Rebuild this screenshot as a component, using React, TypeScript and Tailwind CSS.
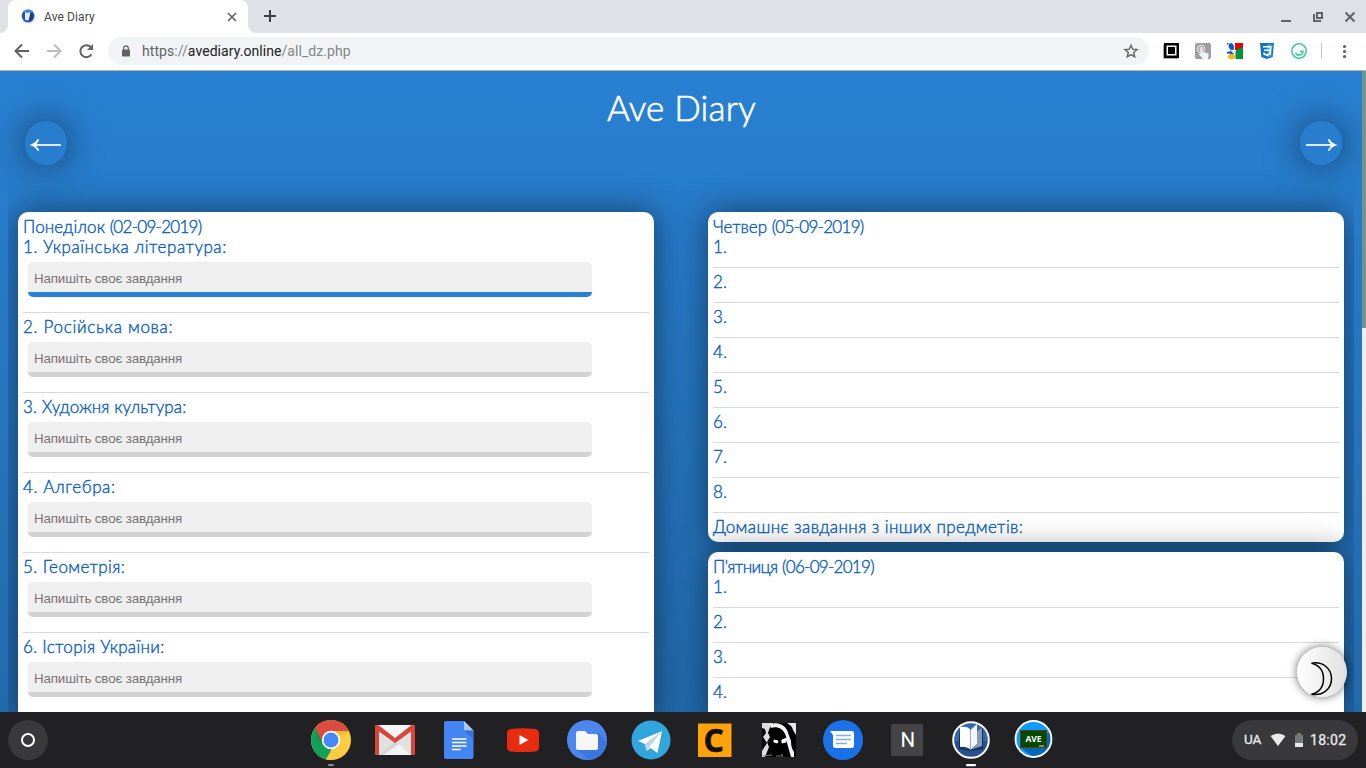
import React from "react";

const PLACEHOLDER = "Напишіть своє завдання";

const MONDAY = [
  { name: "1. Українська література:", track: "tracking-[0.55px]", active: true },
  { name: "2. Російська мова:", track: "tracking-[0.7px]" },
  { name: "3. Художня культура:", track: "tracking-[0.1px]" },
  { name: "4. Алгебра:", track: "tracking-[0.6px]" },
  { name: "5. Геометрія:", track: "tracking-[0.4px]" },
  { name: "6. Історія України:", track: "tracking-[0.3px]" },
];

function TabStrip() {
  return (
    <div className="flex h-[33px] shrink-0 bg-[#dee1e6]">
      <div className="w-2 bg-white">
        <div className="h-full rounded-br-lg bg-[#dee1e6]" />
      </div>
      <div className="flex w-60 items-center rounded-t-lg bg-white pl-[13px]">
        <svg width="15" height="15" viewBox="0 0 15 15">
          <circle cx="7.6" cy="7.8" r="6.8" fill="#d5dae2" />
          <circle cx="7" cy="7" r="6.3" fill="#2458a6" />
          <path d="M2 3a6 6 0 0 1 10 0L7 4z" fill="#4b83d6" />
          <path d="M4 3.2l3 .9 2-1.200v8L7 11.500l-3-.8z" fill="#e4eaf2" />
          <path d="M9.500 4l2 .5v6l-4 1.500z" fill="#173b70" />
        </svg>
        <span className="ml-2 w-[183px] font-['Roboto'] text-[12px] leading-none tracking-[0.1px] text-[#45484b]">Ave Diary</span>
        <svg width="10" height="10" viewBox="0 0 10 10" stroke="#5f6368" strokeWidth="1.6">
          <path d="M1 1l8 8M9 1L1 9" />
        </svg>
      </div>
      <div className="w-2 bg-white">
        <div className="h-full rounded-bl-lg bg-[#dee1e6]" />
      </div>
      <svg className="ml-2 mt-[10px]" width="12" height="12" viewBox="0 0 12 12" fill="#3c4043">
        <path d="M5 0h2v5h5v2H7v5H5V7H0V5h5z" />
      </svg>
      <svg className="ml-auto" width="96" height="33" viewBox="1270 0 96 33" fill="none" stroke="#5f6368" strokeWidth="2">
        <path d="M1281 21h10" />
        <path d="M1317 13h5v5h-5z" />
        <path d="M1314 14v7h7" />
        <path d="M1345.500 12.500l9 9M1354.500 12.500l-9 9" />
      </svg>
    </div>
  );
}

function Toolbar() {
  return (
    <div className="flex h-[38px] shrink-0 items-start border-b border-[#b3b6ba] bg-white">
      <svg width="108" height="37" viewBox="0 33 108 37" fill="none" stroke="#5f6368" strokeWidth="2">
        <path d="M29 51H16M22 44.500L15.500 51l6.500 6.500" />
        <path d="M47 51h13M54 44.500l6.500 6.500-6.500 6.500" stroke="#babcbe" />
        <path d="M91.500 54.300a6 6 0 1 1-.8-7.300" />
        <path d="M93 44v6h-6z" fill="#5f6368" stroke="none" />
      </svg>
      <div className="mt-1 flex h-7 w-[1041px] items-center rounded-full bg-[#f1f3f4] pl-[13px] pr-[10px]">
        <svg width="10" height="12" viewBox="0 0 10 12">
          <path d="M2.700 5V3.200a2.300 2.300 0 0 1 4.600 0V5" fill="none" stroke="#5f6368" strokeWidth="1.200" />
          <rect x="1" y="4.500" width="8" height="7" rx="1" fill="#5f6368" />
        </svg>
        <span className="ml-[11px] font-['Roboto'] text-[14px] leading-none tracking-[0.06px] text-[#80868b]">
          <span className="text-[#5f6368]">https</span>://<span className="text-[#202124]">avediary.online</span>/all_dz.php
        </span>
        <svg className="ml-auto" width="16" height="16" viewBox="0 0 16 16" fill="none" stroke="#5f6368" strokeWidth="1.400">
          <path d="M8 2.200l1.700 4 4.300.4-3.300 2.900 1 4.300L8 11.600l-3.700 2.200 1-4.300L2 6.600l4.300-.4z" />
        </svg>
      </div>
      <svg className="ml-auto" width="210" height="37" viewBox="1156 33 210 37">
        <path d="M1163.500 45v13.500h15" fill="none" stroke="#aaa" />
        <rect x="1165.250" y="44.250" width="12.500" height="12.500" fill="#fff" stroke="#000" strokeWidth="2.500" />
        <rect x="1168" y="47" width="7" height="7" fill="#000" />
        <rect x="1195" y="43" width="16" height="16" rx="2" fill="#9e9e9e" />
        <circle cx="1201" cy="49" r="4" fill="#b9b9b9" stroke="#d8d8d8" />
        <path d="M1200.500 48c0-1.500 2-1.500 2 0v4l4.500 1c1.500.4 2 1 1.500 3l-.5 3h-5l-4-4.500c-.5-1 .5-1.500 1.500-.5z" fill="#edf3fb" />
        <rect x="1227" y="43" width="16" height="16" fill="#fff" />
        <rect x="1235" y="43" width="8" height="7" fill="#e60000" />
        <path d="M1235.500 59v-8c2-3 5-4 7.500-3v11z" fill="#00933b" />
        <ellipse cx="1231.300" cy="46.700" rx="2.600" ry="3.600" fill="#0f55d0" transform="rotate(-15 1231.300 46.700)" />
        <path d="M1227 52l4-1 3 3-2 1c-2-1-3-2-5-1z" fill="#0f55d0" />
        <ellipse cx="1231.500" cy="56.600" rx="3.600" ry="2.700" fill="#f2b90f" />
        <path d="M1227 43h2l-2 2z" fill="#0f55d0" />
        <path d="M1260 43h14l-1.300 14-5.700 2-5.700-2z" fill="#1573b7" />
        <path d="M1267 44.200h5.700l-1.100 12-4.600 1.500z" fill="#36a4dc" />
        <path d="M1263 46.800h7.700l-.3 3.500h-6.400M1270.300 50.300l-.4 3.800-2.900 1-2.800-1-.2-1.600" fill="none" stroke="#fff" strokeWidth="1.600" />
        <circle cx="1299" cy="51" r="7.200" fill="#fff" stroke="#43cba4" strokeWidth="1.600" />
        <path d="M1295.500 53a4 4 0 0 0 7.500-1.700h-3.300" fill="none" stroke="#43cba4" strokeWidth="1.700" />
        <path d="M1321.500 43v16" stroke="#c6c8ca" />
        <g fill="#5f6368"><circle cx="1344.500" cy="46.500" r="1.600" /><circle cx="1344.500" cy="51.500" r="1.600" /><circle cx="1344.500" cy="56.500" r="1.600" /></g>
      </svg>
    </div>
  );
}

function RoundArrow({ flip = false }: { flip?: boolean }) {
  return (
    <button className="flex h-11 w-[42px] items-center justify-center rounded-full bg-[#287dce] shadow-[0_0_35px_rgba(0,0,0,0.5)]">
      <svg width="42" height="44" viewBox="0 0 42 44" fill="none" stroke="#fff">
        <g transform={flip ? "translate(42 0) scale(-1 1)" : ""}>
          <path d="M8 24h28" strokeWidth="1.700" />
          <path d="M13.500 18.500C12 21.500 10 23 7 24c3 1 5 2.500 6.500 5.500" strokeWidth="1.700" />
          <path d="M7 24l4.500-2.500v5z" fill="#fff" stroke="none" />
        </g>
      </svg>
    </button>
  );
}

function Task({ name, track, active }: { name: string; track: string; active?: boolean }) {
  return (
    <div className="mb-1 h-[76px] border-b border-[#d9d9d9]">
      <div className={`h-5 whitespace-nowrap ${track}`}>{name}</div>
      <div className={`ml-[5px] mt-[5px] flex h-[35px] w-[564px] items-center rounded-[5px] border-b-[5px] bg-[#efefef] pl-1.5 pt-[3px] font-['Liberation_Sans'] text-[13.333px] font-normal leading-none tracking-[-0.14px] text-[#757575] [-webkit-text-stroke:0] ${active ? "border-[#2980d3]" : "border-[#d2d2d2]"}`}>
        {PLACEHOLDER}
      </div>
    </div>
  );
}

function DayTitle({ day, date, track }: { day: string; date: string; track: string }) {
  return (
    <div className="h-5 whitespace-nowrap">
      <span className={track}>{day}</span> <span className="tracking-[-0.7px]">({date})</span>
    </div>
  );
}

function NumberedDay({ day, date, track, count, homework }: { day: string; date: string; track: string; count: number; homework?: boolean }) {
  return (
    <section className="rounded-[10px] bg-white p-[5px] shadow-[0_0_32px_rgba(0,0,0,0.5)]">
      <DayTitle day={day} date={date} track={track} />
      {Array.from({ length: count }, (_, i) => (
        <div key={i} className="mb-1 h-[31px] border-b border-[#d9d9d9]">{i + 1}.</div>
      ))}
      {homework && <div className="h-5 whitespace-nowrap tracking-[0.41px]">Домашнє завдання з інших предметів:</div>}
    </section>
  );
}

function Page() {
  return (
    <main className="flex h-[641px] shrink-0 overflow-hidden">
      <div className="flex min-w-0 flex-1 flex-col bg-linear-to-b from-[#2980d2] to-[#216aac]">
        <header className="flex h-[61px] items-start justify-between pl-[25px] pr-5">
          <div className="pt-[50px]"><RoundArrow /></div>
          <h1 className="mr-1 mt-[15px] font-['Lato'] text-[35px] font-light leading-[42px] tracking-[0.2px] text-white [-webkit-text-stroke:0.6px_#fff]">Ave Diary</h1>
          <div className="pt-[50px]"><RoundArrow flip /></div>
        </header>
        <div className="ml-2 flex h-[580px] w-[1346px] items-start gap-[54px] overflow-hidden pl-[10px] pr-[10px] pt-20 font-['Lato'] text-[17px] font-light leading-5 text-[#0c60c2] [-webkit-text-stroke:0.4px_#0c60c2]">
          <section className="w-[636px] rounded-[10px] bg-white p-[5px] shadow-[0_0_32px_rgba(0,0,0,0.5)]">
            <DayTitle day="Понеділок" date="02-09-2019" track="tracking-[0.1px]" />
            {MONDAY.map((task) => <Task key={task.name} {...task} />)}
          </section>
          <div className="flex w-[636px] flex-col gap-[10px]">
            <NumberedDay day="Четвер" date="05-09-2019" track="tracking-[-0.05px]" count={8} homework />
            <NumberedDay day="П'ятниця" date="06-09-2019" track="tracking-[-0.6px]" count={4} />
          </div>
        </div>
      </div>
      <div className="w-1 bg-[#eeeeee]"><div className="h-[257px] bg-[#74938f]" /></div>
    </main>
  );
}

function ShelfIcons() {
  return (
    <svg width="768" height="56" viewBox="300 712 768 56">
      <defs>
        <clipPath id="chrome-disc"><circle cx="331" cy="740" r="20" /></clipPath>
        <clipPath id="ave-disc"><circle cx="1033.500" cy="739" r="17" /></clipPath>
        <clipPath id="book-disc"><circle cx="971" cy="740" r="17" /></clipPath>
      </defs>
      <g clipPath="url(#chrome-disc)">
        <path d="M311 720h40v40h-40z" fill="#ffcd41" />
        <path d="M331 731h22v-13h-42v10l3 1 9 15z" fill="#db4b3e" />
        <path d="M315 728l8.500 16.500 8 4.500-3 12h-20v-31z" fill="#149f5b" />
        <path d="M338.500 744.500L330 761h-5l7-12z" fill="#ffcd41" />
        <path d="M323.500 744.500l-8.300-15 2 9z" fill="#0c7d45" opacity=".5" />
        <path d="M333 731h18l-12 5z" fill="#e0a82d" opacity=".5" />
      </g>
      <circle cx="331" cy="740" r="9.200" fill="#fff" /><circle cx="331" cy="740" r="7.500" fill="#4689f3" />
      <rect x="328" y="764" width="6" height="2" rx="1" fill="#8f9092" />

      <rect x="375" y="725" width="40" height="30" rx="2" fill="#e1e1e1" />
      <path d="M379 755l16-14 16 14z" fill="#f3f3f3" /><path d="M395 741l4 3-16 11h-4z" fill="#d5d5d5" />
      <path d="M378 725h34l-17 13z" fill="#f5f5f5" />
      <path d="M375 727c0-2 2-3 4-1.500L395 738l16-12.500c2-1.500 4-.5 4 1.500v26a2 2 0 0 1-2 2h-2v-23.500L395 743l-16-11.500V755h-2a2 2 0 0 1-2-2z" fill="#d8453a" />

      <path d="M446 721h18l9.500 9.500V757a2 2 0 0 1-2 2H446a2 2 0 0 1-2-2v-34a2 2 0 0 1 2-2z" fill="#4487f4" />
      <path d="M464 721l9.500 9.500H464z" fill="#a9c7fa" /><path d="M464 730.500h9.500v9z" fill="#3769c9" opacity=".7" />
      <path d="M452 739h14.500M452 742.500h14.500M452 746h14.500M452 749.500h8.500" stroke="#fff" strokeWidth="1.700" />

      <path d="M511 729q12-1.500 24 0 4 .5 4 4v14q0 4-4 4.500-12 1-24 0-4-.5-4-4.500v-14q0-3.500 4-4z" fill="#e92b10" />
      <path d="M519.500 735l9 5-9 5z" fill="#fff" />

      <circle cx="587" cy="740" r="20" fill="#4d87ed" />
      <path d="M577 750l12 10c9 0 17-8 18-17l-9-11z" fill="#3d76dc" />
      <path d="M578 731h7l3 3h8a2 2 0 0 1 2 2v12a2 2 0 0 1-2 2h-18a2 2 0 0 1-2-2v-15a2 2 0 0 1 2-2z" fill="#f6f6f6" />

      <circle cx="651" cy="740" r="19.500" fill="#30a6dc" />
      <path d="M638 741l24-10-4.500 22-7-5-4 3-1.500-7z" fill="#fff" />
      <path d="M645 744l17-13-12 15-3.500 5z" fill="#bdd4e2" />

      <rect x="698" y="723.500" width="33.500" height="33.500" fill="#ffa20b" />
      <text x="703.500" y="751.500" fill="#111" stroke="#111" strokeWidth=".6" fontFamily="Open Sans" fontWeight="700" fontSize="32">C</text>

      <rect x="762" y="723" width="34" height="34" fill="#000" />
      <path d="M762 723h11c-3 3-4 7-5 10l2 4-3 5 2 5-4 10h-3v-6l5-8-4-6 3-4-1-4-3-1z" fill="#ddd" />
      <path d="M770 724c7-2 14 0 17 6l4 11c0 5 1 8 3 11v5h-3l-4-14c0-6-2-11-6-14-3-2-7-2-10-1z" fill="#f2f2f2" />
      <path d="M787 723h9v12l-3-5c-1-4-3-5-6-7z" fill="#e9e9e9" />
      <path d="M774 740l4 1-1 2-3-1zM782 740l5-2-1 4-4 1z" fill="#fff" stroke="#fff" />
      <path d="M763 756l9-1M776 756h7l-2-2" stroke="#777" fill="none" />

      <circle cx="843" cy="740" r="20" fill="#1b72e8" />
      <path d="M830 731h22a2 2 0 0 1 2 2v13a2 2 0 0 1-2 2h-17a2 2 0 0 1-2-2v-11z" fill="#fff" />
      <path d="M836 735.500h15M836 739.500h15M836 743.500h11" stroke="#83adf1" strokeWidth="1.400" />

      <rect x="891" y="724" width="32" height="32" rx="1.500" fill="#444446" />
      <text x="900.500" y="747.300" fill="#fff" fontFamily="Roboto" fontSize="20.500">N</text>

      <g clipPath="url(#book-disc)"><path d="M953 722h36v36h-36z" fill="#3466b1" /><path d="M953 741h36v18h-36z" fill="#294f91" /></g>
      <path d="M959 727v22l12 2 12-2v-21l-2 0v19l-10 3-10-3z" fill="#0b3942" />
      <path d="M960 727q7-1 10 2v20q-4-3-10-2z" fill="#fff" /><path d="M970.500 730l6.500-6v20l-6.500 6z" fill="#f4f8fc" />
      <path d="M977 731l5-3v18l-10 3 5-5z" fill="#879bbd" />
      <circle cx="971" cy="740" r="17.800" fill="none" stroke="#fff" strokeWidth="2" />
      <rect x="966" y="764" width="10" height="2.200" rx="1" fill="#fff" />

      <circle cx="1033.500" cy="739" r="18" fill="#109cff" />
      <g clipPath="url(#ave-disc)"><path d="M1020 747l18 14h18v-32z" fill="#0867b4" /></g>
      <rect x="1020.500" y="730.500" width="26" height="17" fill="#064804" stroke="#5a3c13" />
      <text x="1025.500" y="742" fill="#fff" fontFamily="Open Sans" fontWeight="700" fontSize="8.500" textLength="16">AVE</text>
      <path d="M1039 746h5" stroke="#ddd" />
      <circle cx="1033.500" cy="739" r="18" fill="none" stroke="#fff" strokeWidth="1.800" />
    </svg>
  );
}

function Shelf() {
  return (
    <footer className="flex h-14 shrink-0 items-center bg-[#212124] pl-2 pr-2">
      <button className="mr-[252px] flex size-10 items-center justify-center rounded-full bg-[#39393b]">
        <span className="size-[14px] rounded-full border-2 border-white" />
      </button>
      <ShelfIcons />
      <div className="ml-auto flex h-10 w-[126px] items-center rounded-full bg-[#39393b] pl-3 font-['Roboto'] text-[14px] font-medium leading-none text-[#e8eaed]">
        <span className="w-[26px] text-[13.500px] font-normal [-webkit-text-stroke:0.3px_#e8eaed]">UA</span>
        <svg width="38" height="16" viewBox="1270 732 38 16">
          <path d="M1270.500 736q7.500-5 15 0l-7.500 10z" fill="#e8eaed" />
          <path d="M1295 735h2v-2h4v2h2v12h-8z" fill="#77777a" /><path d="M1295 743h8v4h-8z" fill="#e8eaed" />
        </svg>
        <span className="ml-0.5 font-normal tracking-[0.3px] [-webkit-text-stroke:0.3px_#e8eaed]">18:02</span>
      </div>
    </footer>
  );
}

export default function App() {
  return (
    <div className="relative flex h-[768px] w-[1366px] flex-col overflow-hidden">
      <TabStrip />
      <Toolbar />
      <Page />
      <Shelf />
      <button className="absolute left-[1297px] top-[647px] size-[50px] rounded-full bg-linear-to-r from-white to-[#e0e0e0] shadow-[0_0_10px_rgba(0,0,0,0.6)]">
        <svg width="50" height="50" viewBox="1297 647 50 50" fill="none" stroke="#000" strokeWidth="1.500">
          <path d="M1311.500 663.200c11-2 20 5 20 15.500s-9 17.500-20 15.500c8-2 12-8 12-15.500s-4-13.500-12-15.500z" />
        </svg>
      </button>
    </div>
  );
}
